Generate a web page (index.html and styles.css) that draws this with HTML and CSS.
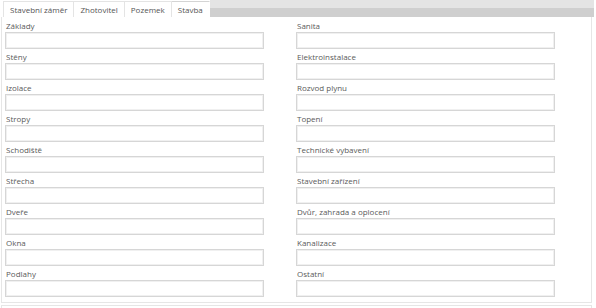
FILE: index.html
```html
<!DOCTYPE html>
<html lang="cs">
<head>
  <meta charset="UTF-8" />
  <title>Stavba</title>
  <link rel="stylesheet" href="styles.css">
</head>
<body>

  <div class="tabs">
    <div class="tab-list">
      <a class="tab">Stavební záměr</a>
      <a class="tab">Zhotovitel</a>
      <a class="tab">Pozemek</a>
      <a class="tab active">Stavba</a>
    </div>
    <div class="tab-fill"></div>
  </div>

  <div class="panel">
    <div class="form-grid">
      <div class="field"><label>Základy</label><input type="text" /></div>
      <div class="field"><label>Sanita</label><input type="text" /></div>
      <div class="field"><label>Stěny</label><input type="text" /></div>
      <div class="field"><label>Elektroinstalace</label><input type="text" /></div>
      <div class="field"><label>Izolace</label><input type="text" /></div>
      <div class="field"><label>Rozvod plynu</label><input type="text" /></div>
      <div class="field"><label>Stropy</label><input type="text" /></div>
      <div class="field"><label>Topení</label><input type="text" /></div>
      <div class="field"><label>Schodiště</label><input type="text" /></div>
      <div class="field"><label>Technické vybavení</label><input type="text" /></div>
      <div class="field"><label>Střecha</label><input type="text" /></div>
      <div class="field"><label>Stavební zařízení</label><input type="text" /></div>
      <div class="field"><label>Dveře</label><input type="text" /></div>
      <div class="field"><label>Dvůr, zahrada a oplocení</label><input type="text" /></div>
      <div class="field"><label>Okna</label><input type="text" /></div>
      <div class="field"><label>Kanalizace</label><input type="text" /></div>
      <div class="field"><label>Podlahy</label><input type="text" /></div>
      <div class="field"><label>Ostatní</label><input type="text" /></div>
    </div>
  </div>

  <div class="next-bar"></div>

</body>
</html>
```

FILE: styles.css
```css
body {
  margin: 0;
  padding: 0;
  background: #fff;
  font-family: 'Open Sans', sans-serif;
  font-size: 8px;
  color: #5a5a5a;
  width: 594px;
}

.tabs {
  display: flex;
  height: 17px;
  background: linear-gradient(#e4e4e4 0, #e4e4e4 50%, #cfcfcf 50%, #cfcfcf 100%);
}

.tab-list {
  display: flex;
  padding: 1px 0 0 3px;
  background: #fff;
}

.tab {
  display: block;
  padding: 0 6px;
  line-height: 16px;
  background: #fff;
  color: #555;
  border: 1px solid #e4e4e4;
  border-bottom: none;
  border-left: none;
  white-space: nowrap;
}

.tab:first-child {
  border-left: 1px solid #e4e4e4;
}

.tab.active {
  border-right-color: #fff;
  border-top: 1px solid #d4d4d4;
}

.tab-fill {
  flex: 1;
}

.panel {
  margin: 0 2px 0 1px;
  border: 1px solid #e6e6e6;
  border-top: none;
  padding: 3px 0 4px 3px;
}

.form-grid {
  display: grid;
  grid-template-columns: 259px 259px;
  column-gap: 32px;
  row-gap: 1px;
}

.field label {
  display: block;
  line-height: 12px;
  padding-left: 1px;
}

.field input {
  display: block;
  box-sizing: border-box;
  width: 259px;
  height: 17px;
  margin: 0 0 1px 0;
  border: 1px solid #d6d6d6;
  box-shadow: inset 0 0 0 1px #f0f0f0;
  background: #fff;
}

.next-bar {
  margin: 2px 2px 0 1px;
  height: 4px;
  border-top: 1px solid #e6e6e6;
  border-left: 1px solid #e6e6e6;
  border-right: 1px solid #e6e6e6;
}
```
